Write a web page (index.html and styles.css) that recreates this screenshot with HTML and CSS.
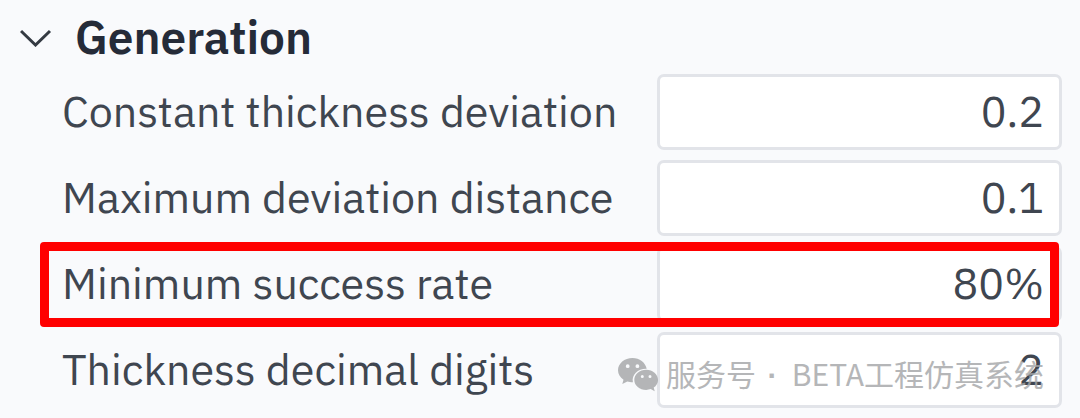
FILE: index.html
```html
<!DOCTYPE html>
<html lang="en">
<head>
    <meta charset="UTF-8">
    <meta name="viewport" content="width=device-width, initial-scale=1.0">
    <title>Generation</title>
    <link rel="stylesheet" href="styles.css">
</head>
<body>
    <details class="section" open>
        <summary class="section-header">
            <svg class="chevron" width="32" height="20" viewBox="0 0 32 20" aria-hidden="true">
                <path d="M1 4 L15.500 18 L30 4" fill="none" stroke="#343a42" stroke-width="3"/>
            </svg>
            <span class="section-title">Generation</span>
        </summary>

        <div class="fields">
            <div class="field">
                <label for="thickness-deviation">Constant thickness deviation</label>
                <input type="text" id="thickness-deviation" value="0.2">
            </div>
            <div class="field">
                <label for="deviation-distance">Maximum deviation distance</label>
                <input type="text" id="deviation-distance" value="0.1">
            </div>
            <div class="field highlight">
                <label for="success-rate">Minimum success rate</label>
                <input type="text" id="success-rate" value="80%">
            </div>
            <div class="field">
                <label for="decimal-digits">Thickness decimal digits</label>
                <input type="text" id="decimal-digits" value="2">
                <div class="watermark" lang="zh-CN">
                    <svg width="40" height="34" viewBox="0 0 40 34" aria-hidden="true">
                        <path fill="#a3a5a7" fill-rule="evenodd" d="M14.500 0C6.500 0 0 5.500 0 12.300c0 3.900 2.100 7.200 5.500 9.500L4.300 26l5-2.500c1.700.5 3.400.8 5.600.8-1.500-7.800 5.200-13.800 13.800-13.500C27.400 4.500 21.500 0 14.500 0zM9.700 6.300a1.900 1.900 0 1 1 0 3.800 1.900 1.900 0 0 1 0-3.800zM19.400 6.300a1.900 1.900 0 1 1 0 3.800 1.900 1.900 0 0 1 0-3.800z"/>
                        <path fill="#a3a5a7" fill-rule="evenodd" d="M28.200 11.700c6.500 0 11.800 4.600 11.800 10.200 0 3.100-1.700 5.800-4.300 7.700l1 3.600-4-2.100c-1.400.5-2.900.8-4.500.8-6.600 0-11.900-4.500-11.900-10s5.300-10.200 11.900-10.200zM24.300 17.100a1.500 1.500 0 1 0 0 3 1.500 1.500 0 0 0 0-3zM32 17.100a1.500 1.500 0 1 0 0 3 1.500 1.500 0 0 0 0-3z"/>
                    </svg>
                    <span>服务号<span class="dot"> · </span>BETA工程仿真系统</span>
                </div>
            </div>
        </div>
    </details>
</body>
</html>
```
FILE: styles.css
```css
body {
    margin: 0;
    background: #f9fafc;
    color: #3f4650;
    font-family: "IBM Plex Sans", Roboto, sans-serif;
    font-size: 43px;
}
.section { padding: 0 18px 10px 20px; }
.section-header {
    display: flex;
    align-items: center;
    gap: 23px;
    height: 74px;
    list-style: none;
    cursor: pointer;
}
.section-title {
    color: #252b38;
    font-size: 46px;
    font-weight: 600;
    line-height: 74px;
}
.fields {
    display: grid;
    gap: 10px;
    padding-left: 42px;
}
.field {
    position: relative;
    display: flex;
    align-items: center;
    justify-content: space-between;
}
.field label {
    padding-bottom: 3px;
    white-space: nowrap;
}
.field input {
    box-sizing: border-box;
    width: 405px;
    height: 76px;
    padding: 0 15px 3px;
    border: 3px solid #e2e4e9;
    border-radius: 7px;
    background: #fff;
    color: inherit;
    font: inherit;
    text-align: right;
}
/* red frame drawn over the row */
.highlight::after {
    content: "";
    position: absolute;
    inset: -4px 3px -5px -22px;
    border: 9px solid #f00;
    border-radius: 4px;
    pointer-events: none;
}
.watermark {
    position: absolute;
    top: 19px;
    right: 18px;
    display: flex;
    align-items: center;
    gap: 8px;
    color: #a3a5a7;
    font-family: "Noto Sans CJK SC", sans-serif;
    font-size: 30px;
    font-weight: 400;
    line-height: 44px;
    white-space: nowrap;
    opacity: 0.8;
    pointer-events: none;
}
.dot {
    margin: 0 6px 0 3px;
    font-family: "Liberation Sans", sans-serif;
    font-weight: 700;
}
```
